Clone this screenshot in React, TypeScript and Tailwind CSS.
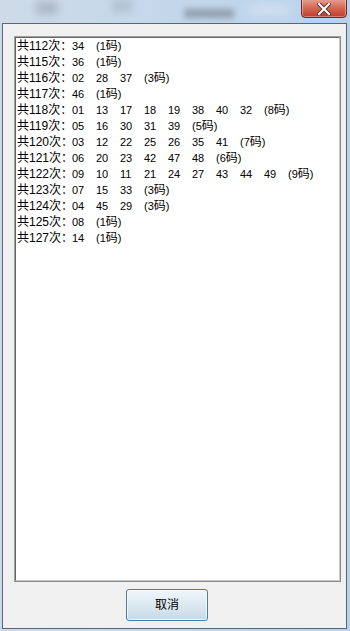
import React from "react";

const lines: [string, string[], string][] = [
  ["共112次：", ["34"], "(1码)"],
  ["共115次：", ["36"], "(1码)"],
  ["共116次：", ["02", "28", "37"], "(3码)"],
  ["共117次：", ["46"], "(1码)"],
  ["共118次：", ["01", "13", "17", "18", "19", "38", "40", "32"], "(8码)"],
  ["共119次：", ["05", "16", "30", "31", "39"], "(5码)"],
  ["共120次：", ["03", "12", "22", "25", "26", "35", "41"], "(7码)"],
  ["共121次：", ["06", "20", "23", "42", "47", "48"], "(6码)"],
  ["共122次：", ["09", "10", "11", "21", "24", "27", "43", "44", "49"], "(9码)"],
  ["共123次：", ["07", "15", "33"], "(3码)"],
  ["共124次：", ["04", "45", "29"], "(3码)"],
  ["共125次：", ["08"], "(1码)"],
  ["共127次：", ["14"], "(1码)"],
];

export default function App() {
  return (
    <div
      className="w-[350px] h-[631px] flex flex-col overflow-hidden bg-gradient-to-r from-[#cddbe8] via-[#c4d7ea] to-[#b8d2ee]"
      style={{ fontFamily: '"Liberation Sans", "Noto Sans CJK SC", sans-serif' }}
    >
      {/* title bar */}
      <div className="relative h-[23px] shrink-0 overflow-hidden">
        <div className="absolute left-[36px] top-[2px] w-[22px] h-[12px] bg-[#9aa7b4] blur-[4px] opacity-70" />
        <div className="absolute left-[112px] top-[0px] w-[20px] h-[12px] bg-[#a3b1bf] blur-[4px] opacity-60" />
        <div className="absolute left-[184px] top-[9px] w-[50px] h-[9px] bg-[#7c8794] blur-[3px] opacity-70" />
        <div className="absolute left-[250px] top-[4px] w-[40px] h-[12px] bg-[#d6e4f1] blur-[4px] opacity-70" />
        <div className="absolute left-[301px] top-[-3px] w-[46px] h-[21px] rounded-b-[4px] border border-[#6b2a22] bg-gradient-to-b from-[#e9a89a] via-[#d46a55] to-[#c0392b] flex items-center justify-center shadow-[inset_0_0_0_1px_rgba(255,255,255,0.35)]">
          <svg width="14" height="12" viewBox="0 0 14 12" className="mt-[3px]">
            <path d="M2 1 L12 11 M12 1 L2 11" stroke="#5a2a24" strokeWidth="4" strokeLinecap="square" />
            <path d="M2 1 L12 11 M12 1 L2 11" stroke="#ffffff" strokeWidth="2.2" strokeLinecap="square" />
          </svg>
        </div>
      </div>

      {/* client area */}
      <div className="ml-[2px] w-[345px] h-[606px] shrink-0 border border-[#5b6672] bg-[#f0f0f0] pl-[11px] pt-[12px]">
        <div className="w-[327px] h-[546px] border border-t-[#a0a0a0] border-l-[#a0a0a0] border-r-[#8a8a8a] border-b-[#8a8a8a]">
          <div className="w-full h-full border border-t-[#646464] border-l-[#646464] border-r-[#c8c8c8] border-b-[#c8c8c8] bg-white pl-[1px]">
            {lines.map(([p, nums, c], i) => (
              <div key={i} className="flex h-[16px] items-center text-[12px] leading-[16px] text-black whitespace-nowrap">
                <span className="w-[55px] shrink-0">{p}</span>
                {nums.map((n, j) => (
                  <span key={j} className="w-[24px] shrink-0 text-[11px]">{n}</span>
                ))}
                <span className="shrink-0 text-[11px]">
                  (<span className="text-[11px]">{c.slice(1, 2)}</span><span className="text-[12px]">码</span>)
                </span>
              </div>
            ))}
          </div>
        </div>
        <div className="ml-[112px] mt-[7px] w-[82px] h-[32px] rounded-[3px] border border-[#3c7fb1] bg-gradient-to-b from-[#eef6fb] via-[#dde9f1] to-[#c6d9e5] shadow-[inset_0_0_0_1px_rgba(255,255,255,0.7)] flex items-center justify-center text-[12px] text-black">
          取消
        </div>
      </div>
    </div>
  );
}
